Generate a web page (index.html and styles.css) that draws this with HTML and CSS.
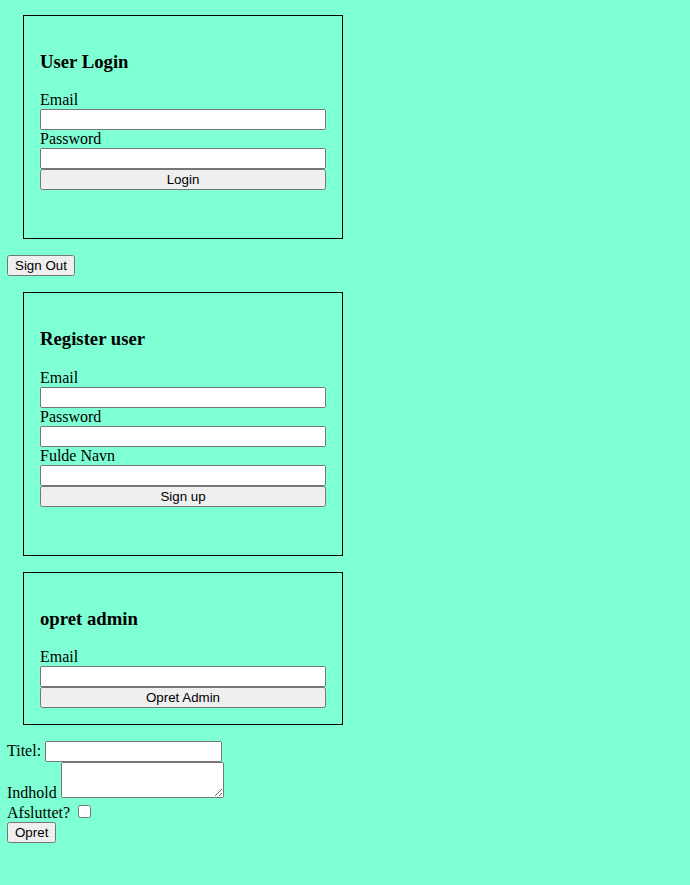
FILE: index.html
```html
<!DOCTYPE html>
<html lang="da">
<head>
<meta charset="utf-8">
<title>Login</title>
<link rel="stylesheet" href="styles.css">
</head>
<body>
<form class="card">
  <h3>User Login</h3>
  <label for="login-email">Email</label>
  <input id="login-email" type="email">
  <label for="login-password">Password</label>
  <input id="login-password" type="password">
  <button type="button">Login</button>
  <p class="message"></p>
</form>
<button type="button">Sign Out</button>
<form class="card">
  <h3>Register user</h3>
  <label for="reg-email">Email</label>
  <input id="reg-email" type="email">
  <label for="reg-password">Password</label>
  <input id="reg-password" type="password">
  <label for="reg-name">Fulde Navn</label>
  <input id="reg-name" type="text">
  <button type="button">Sign up</button>
  <p class="message"></p>
</form>
<form class="card">
  <h3>opret admin</h3>
  <label for="admin-email">Email</label>
  <input id="admin-email" type="email">
  <button type="button">Opret Admin</button>
</form>
<form>
  <div><label for="title">Titel:</label> <input class="title-field" id="title" type="text"></div>
  <div><label for="content">Indhold</label> <textarea class="content-field" id="content"></textarea></div>
  <div><label for="done">Afsluttet?</label> <input id="done" type="checkbox"></div>
  <button type="button">Opret</button>
</form>
</body>
</html>
```
FILE: styles.css
```css
body {
  margin: 15px 7px;
  background: aquamarine;
  color: #000;
  font-family: "Liberation Serif", "Times New Roman", serif;
}

button {
  font-family: "Liberation Sans", Arial, sans-serif;
}

.card {
  display: flex;
  flex-direction: column;
  box-sizing: border-box;
  max-width: 320px;
  margin: 16px;
  padding: 16px;
  border: 1px solid #000;
}

.card:first-child {
  margin-top: 0;
}

.message {
  margin: 16px 0;
}

.title-field,
.content-field {
  box-sizing: border-box;
}

.title-field {
  width: 177px;
}

.content-field {
  width: 163px;
  height: 36px;
}
```
